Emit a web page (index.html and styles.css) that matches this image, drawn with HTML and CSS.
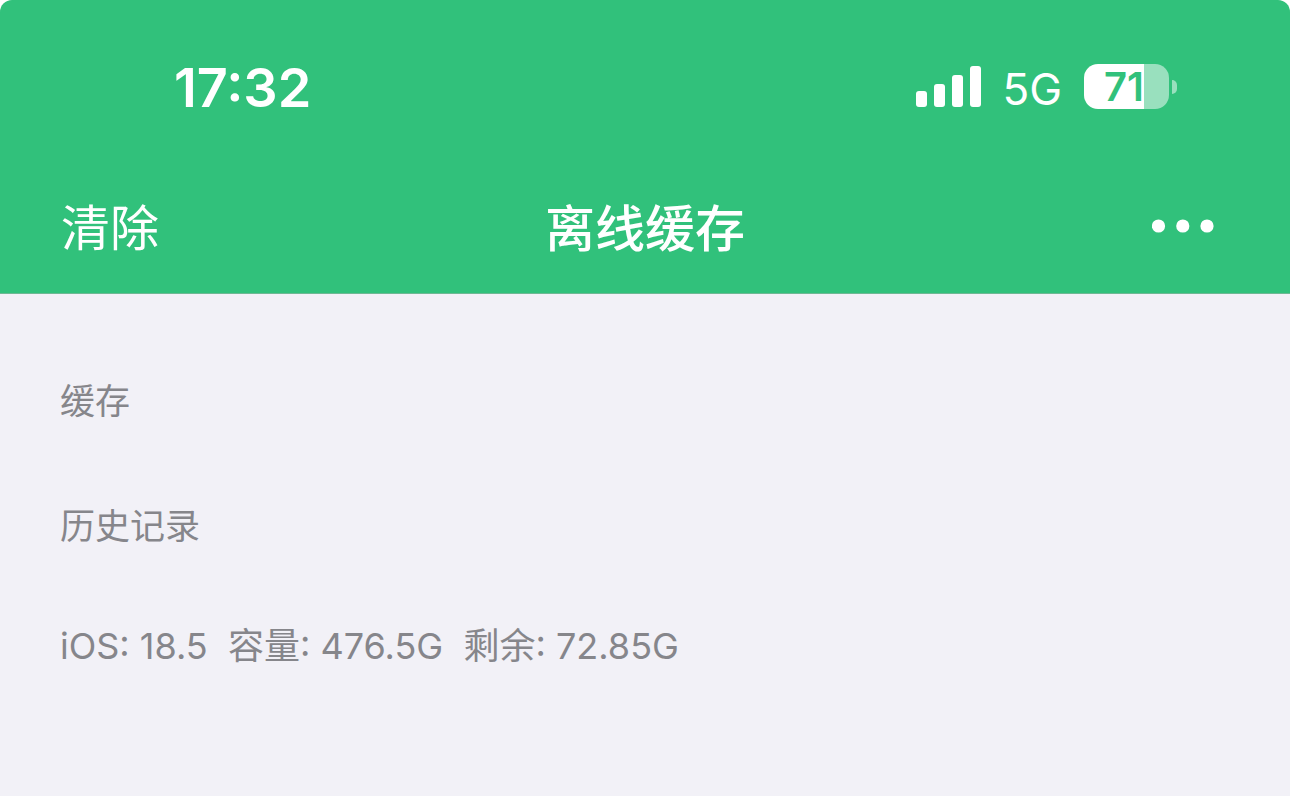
FILE: index.html
```
<!DOCTYPE html>
<html lang="zh-CN">
<head>
<meta charset="utf-8">
<meta name="viewport" content="width=device-width, initial-scale=1">
<title>离线缓存</title>
<link rel="stylesheet" href="styles.css">
</head>
<body>
<header class="top">
  <div class="status">
    <time class="clock">17:32</time>
    <div class="indicators">
      <svg class="signal" width="66" height="42" viewBox="0 0 66 42" fill="#fff" aria-hidden="true">
        <rect x="0" y="25" width="11" height="16" rx="3"/>
        <rect x="18" y="18" width="11" height="23" rx="3"/>
        <rect x="36" y="9" width="11" height="32" rx="3"/>
        <rect x="54" y="0" width="11" height="41" rx="3"/>
      </svg>
      <span class="network">5G</span>
      <div class="battery">
        <div class="cell">71</div>
        <span class="tip"></span>
      </div>
    </div>
  </div>
  <nav class="navbar">
    <button class="clear" type="button">清除</button>
    <h1 class="title">离线缓存</h1>
    <button class="more" type="button" aria-label="更多">
      <svg width="62" height="14" viewBox="0 0 62 14" fill="#fff" aria-hidden="true">
        <circle cx="6.5" cy="7" r="6.6"/>
        <circle cx="30.8" cy="7" r="6.6"/>
        <circle cx="55" cy="7" r="6.6"/>
      </svg>
    </button>
  </nav>
</header>
<main class="content">
  <h2 class="section">缓存</h2>
  <h2 class="section">历史记录</h2>
  <p class="storage">iOS: 18.5&nbsp; 容量: 476.5G&nbsp; 剩余: 72.85G</p>
</main>
</body>
</html>
```
FILE: styles.css
```
* { box-sizing: border-box; }
html { background: #fff; }
body {
  margin: 0;
  min-height: 100vh;
  display: flex;
  flex-direction: column;
  font-family: Inter, "Noto Sans CJK SC", sans-serif;
}
h1, h2, p { margin: 0; font-weight: 400; }
.top {
  background: #31c17b;
  color: #fff;
  border-radius: 12px 12px 0 0;
  border-bottom: 1px solid #6fb894;
  padding-top: 56px;
}
.status {
  display: flex;
  justify-content: space-between;
  align-items: flex-start;
  padding: 0 113px 0 174px;
}
.clock { font-size: 54px; font-weight: 600; line-height: 64px; }
.indicators { display: flex; align-items: center; height: 61px; }
.signal { display: block; margin-right: 20px; }
.network { font-size: 44px; line-height: 60px; margin-right: 22px; padding-top: 4px; }
.battery { display: flex; align-items: center; gap: 3px; }
.cell {
  width: 85px;
  height: 45px;
  padding-left: 20px;
  border-radius: 14px;
  background: linear-gradient(to right, #fff 60px, #99e0be 60px);
  color: #31c17b;
  font-size: 40px;
  font-weight: 600;
  line-height: 45px;
}
.tip { width: 5px; height: 14px; border-radius: 0 5px 5px 0; background: #99e0be; }
.navbar {
  display: grid;
  grid-template-columns: 1fr auto 1fr;
  align-items: center;
  padding: 73px 61px 28px;
}
.clear, .more { border: 0; background: none; color: inherit; padding: 0; font-family: inherit; }
.clear { justify-self: start; font-size: 49px; line-height: 72px; }
.title { font-size: 50px; font-weight: 500; line-height: 72px; }
.more { justify-self: end; margin-right: 15px; padding-bottom: 6px; }
.more svg { display: block; }
.content {
  flex: 1;
  background: #f2f1f7;
  color: #86868b;
  padding: 80px 60px;
}
.section { font-size: 35px; line-height: 54px; margin-bottom: 71px; }
.storage { font-size: 36px; line-height: 44px; }
```
